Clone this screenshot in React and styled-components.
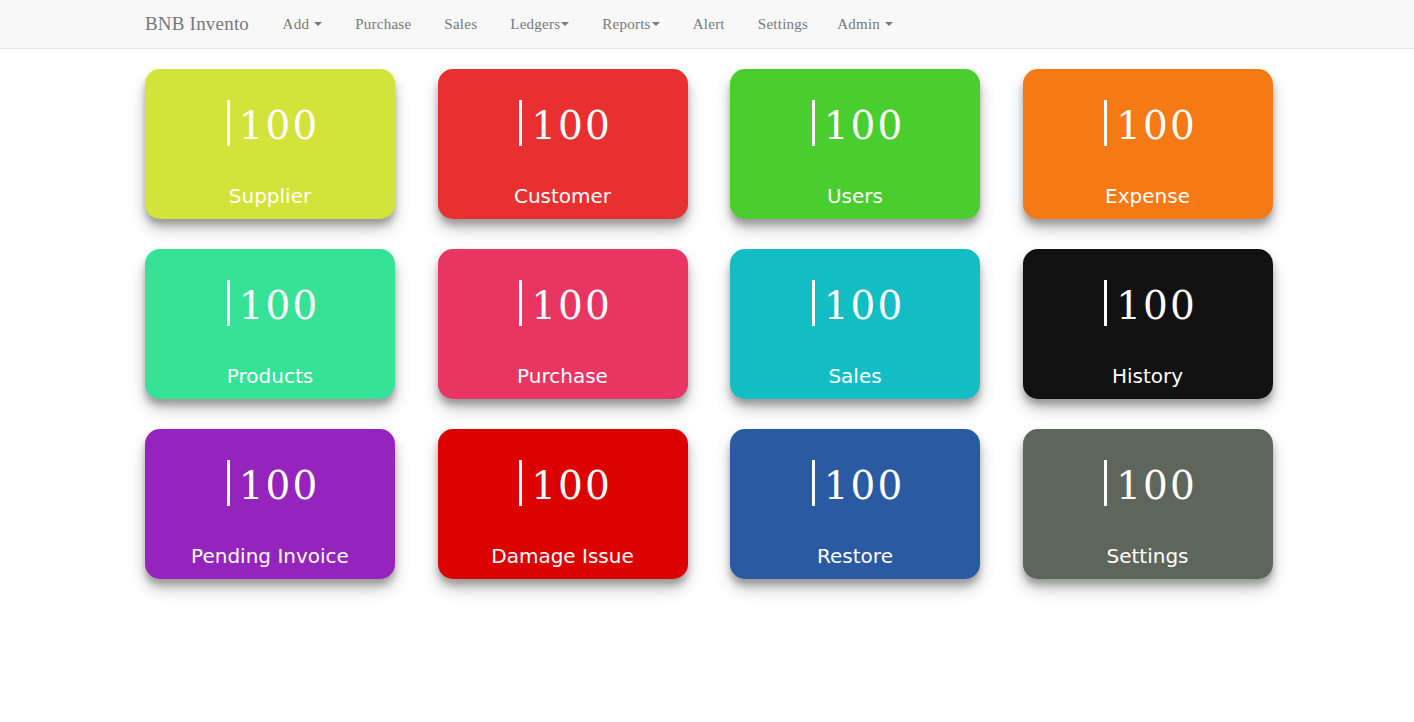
import React from 'react'
import styled, { createGlobalStyle } from 'styled-components'

const GlobalStyle = createGlobalStyle`
  html, body {
    margin: 0;
    padding: 0;
    background: #fff;
    min-height: 100vh;
    font-family: "DejaVu Serif", Georgia, serif;
  }
`;

const Page = styled.div`
  min-height: 722px;
  background: #fff;
`;

const NavBar = styled.nav`
  height: 48px;
  background: #f8f8f8;
  border-bottom: 1px solid #e7e7e7;
`;

const NavInner = styled.div`
  width: 1170px;
  margin: 0 auto;
  display: flex;
  align-items: center;
  height: 100%;
  padding-left: 23px;
  box-sizing: border-box;
`;

const Brand = styled.a`
  font-family: "Liberation Serif", Georgia, serif;
  font-size: 19px;
  color: #777;
  margin-right: 17px;
  letter-spacing: 0.2px;
`;

const NavLink = styled.a`
  font-family: "Liberation Serif", Georgia, serif;
  font-size: 15px;
  letter-spacing: 0.25px;
  color: #777;
  padding: 0 16.5px 0 ${(p) => p.pl || 16.5}px;
  display: flex;
  align-items: center;
`;

const Caret = styled.span`
  display: inline-block;
  width: 0;
  height: 0;
  margin-left: ${(p) => (p.tight ? 1 : 5)}px;
  border-top: 4px solid #777;
  border-left: 4px solid transparent;
  border-right: 4px solid transparent;
`;

const Container = styled.main`
  width: 1170px;
  margin: 0 auto;
  padding: 20px 0 60px;
  display: grid;
  grid-template-columns: repeat(4, 292.5px);
  row-gap: 30px;
`;

const Card = styled.div`
  margin-left: 23px;
  width: 250px;
  height: 150px;
  border-radius: 15px;
  background: ${(p) => p.bg};
  color: #fff;
  box-shadow: 0 10px 16px rgba(0, 0, 0, 0.22), 0 6px 6px rgba(0, 0, 0, 0.24);
  display: flex;
  flex-direction: column;
  align-items: center;
`;

const Count = styled.div`
  margin-top: 30px;
  height: 48px;
  display: flex;
  align-items: center;
  justify-content: center;
  padding-left: 6px;
`;

const Bar = styled.span`
  display: inline-block;
  width: 3px;
  height: 46px;
  background: #fff;
  margin-right: 9px;
`;

const Number = styled.span`
  font-family: "DejaVu Serif", Georgia, serif;
  font-size: 39px;
  letter-spacing: 2px;
  line-height: 1;
  margin-top: 5px;
`;

const Label = styled.div`
  margin-top: auto;
  margin-bottom: 11px;
  font-family: "DejaVu Sans", Verdana, sans-serif;
  font-size: 20px;
`;

const cards = [
  ['Supplier', '#d3e339'],
  ['Customer', '#e7302f'],
  ['Users', '#4acd2f'],
  ['Expense', '#f57914'],
  ['Products', '#36e396'],
  ['Purchase', '#e93562'],
  ['Sales', '#12bdc4'],
  ['History', '#111111'],
  ['Pending Invoice', '#9524bd'],
  ['Damage Issue', '#dc0202'],
  ['Restore', '#2a5aa2'],
  ['Settings', '#5e665b'],
];

export default function App() {
  return (
    <Page>
      <GlobalStyle />
      <NavBar>
        <NavInner>
          <Brand>BNB Invento</Brand>
          <NavLink>Add <Caret /></NavLink>
          <NavLink>Purchase</NavLink>
          <NavLink>Sales</NavLink>
          <NavLink>Ledgers<Caret tight /></NavLink>
          <NavLink>Reports<Caret tight /></NavLink>
          <NavLink>Alert</NavLink>
          <NavLink>Settings</NavLink>
          <NavLink pl={12.5}>Admin <Caret /></NavLink>
        </NavInner>
      </NavBar>
      <Container>
        {cards.map(([name, bg]) => (
          <Card key={name} bg={bg}>
            <Count>
              <Bar />
              <Number>100</Number>
            </Count>
            <Label>{name}</Label>
          </Card>
        ))}
      </Container>
    </Page>
  )
}
